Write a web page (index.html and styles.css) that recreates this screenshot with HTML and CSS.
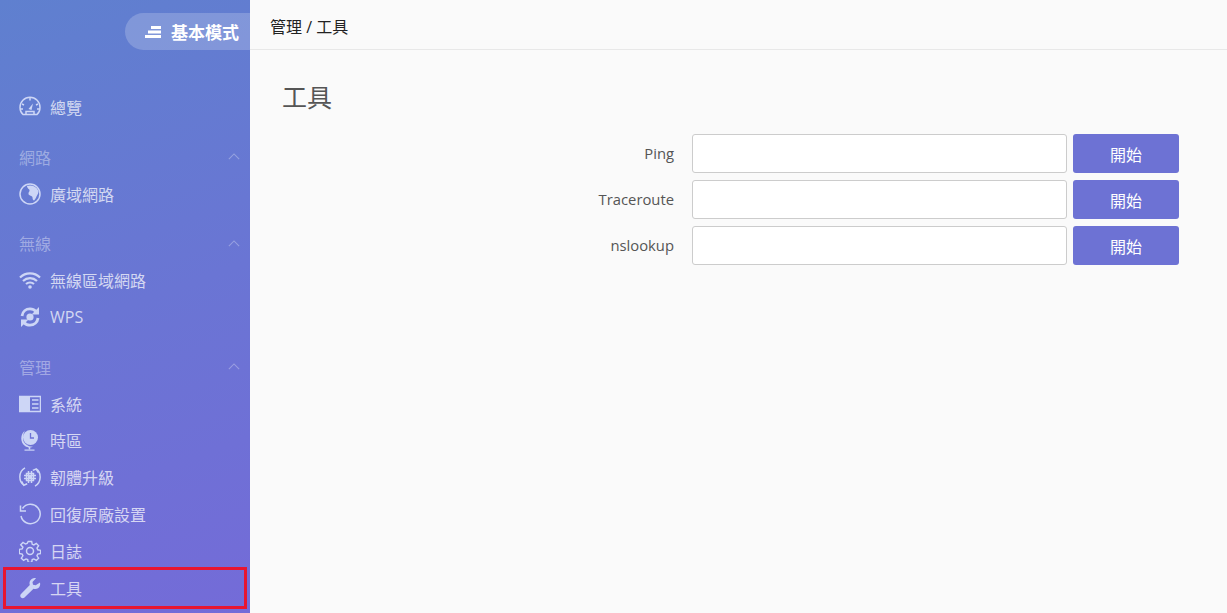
FILE: index.html
```html
<!DOCTYPE html>
<html lang="zh-Hant">
<head>
<meta charset="utf-8">
<title>工具</title>
<link rel="stylesheet" href="styles.css">
</head>
<body>
<div class="app">
  <aside class="sidebar">
    <div class="mode-row">
      <div class="mode-pill">
        <svg class="mode-icon" viewBox="0 0 16 12"><path d="M6 0h10v3H6zM3 4.500h13v3H3zM0 9h16v3H0z" fill="#fff"/></svg>
        <span>基本模式</span>
      </div>
    </div>
    <nav class="menu">
      <a class="item">
        <svg class="icon" viewBox="0 0 22 22"><path d="M4 18.500a10 10 0 1 1 14 0z" class="ln"/><path d="M11 2v2.500M3 8l2 1M19 8l-2 1M1.500 13H4M20.500 13H18" class="ln"/><path d="M9.500 13 14 7.500l-1.500 6.500z" class="fl"/><path d="M7 18v-2.500h8V18" class="ln"/></svg>
        <span>總覽</span>
      </a>
      <div class="group">
        <span>網路</span>
        <svg class="chev" viewBox="0 0 14 8"><path d="M1 7l6-6 6 6"/></svg>
      </div>
      <a class="item">
        <svg class="icon" viewBox="0 0 22 22"><circle cx="11" cy="11" r="10" class="ln"/><path d="M8 3c3-1.200 7.500-.5 10 2.500 1.800 2.200 1.700 4.500.3 6.500-1 1.500-1.500 4-3 5.200-1 .8-1.800-1.200-1.800-2.700 0-2-3.500-1.500-4-3.500-.5-1.800 1.500-2.500 1-4-.3-1-2-1.500-2.500-3.500z" class="fl"/></svg>
        <span>廣域網路</span>
      </a>
      <div class="group">
        <span>無線</span>
        <svg class="chev" viewBox="0 0 14 8"><path d="M1 7l6-6 6 6"/></svg>
      </div>
      <a class="item">
        <svg class="icon" viewBox="0 0 22 18"><path d="M1 6.500c5.500-5.500 14.500-5.500 20 0M4 10c4-3.800 10-3.800 14 0M7 13c2.300-2 5.700-2 8 0" class="wf"/><circle cx="11" cy="16" r="1.800" class="fl"/></svg>
        <span>無線區域網路</span>
      </a>
      <a class="item">
        <svg class="icon" viewBox="0 0 22 22"><circle cx="11" cy="11" r="3.600" class="fl"/><path d="M3 10C3.500 5.500 7 2.800 11 2.800c2.500 0 4.500 1 6 2.700" class="wb"/><path d="M19 12c-.5 4.500-4 7.200-8 7.200-2.500 0-4.500-1-6-2.700" class="wb"/><path d="M20 1v7.500h-7.500zM2 21v-7.500h7.500z" class="fl"/></svg>
        <span>WPS</span>
      </a>
      <div class="group">
        <span>管理</span>
        <svg class="chev" viewBox="0 0 14 8"><path d="M1 7l6-6 6 6"/></svg>
      </div>
      <a class="item">
        <svg class="icon" viewBox="0 0 22 16"><path d="M.5.500h10.500v15H.500z" class="fl"/><path d="M.5.500h21v15H.500z" class="ln"/><path d="M13 4h6.500M13 8h6.500M13 12h6.500" class="ln"/></svg>
        <span>系統</span>
      </a>
      <a class="item">
        <svg class="icon" viewBox="0 0 22 22"><path d="M6 1.500C1 5.500 1 13.500 6 17c2.500 1.700 5.500 1.900 8 .8-5.500 0-10-3.800-10-8.300 0-3 .8-6.500 2-8z" class="fl"/><circle cx="11.500" cy="8.500" r="7.500" class="fl"/><path d="M11.500 4v5h3.500" class="cut"/><path d="M10.500 18v2.500" class="ln"/><path d="M5.500 20.500h10v1.200h-10z" class="fl"/></svg>
        <span>時區</span>
      </a>
      <a class="item">
        <svg class="icon" viewBox="0 0 22 22"><path d="M6 1.800C-.8 5.500-.5 15.500 4.800 19M2.600 15.500l2.200 3.800 3.400-1.500M16 20.200c6.800-3.700 6.500-13.700 1.200-17.200M19.400 6.700 17.200 3l-3.400 1.400" class="ln"/><path d="M7.500 7.500h7v7h-7z" class="ln"/><path d="M9.500 5v12M12.500 5v12M5 9.500h12M5 12.500h12" class="ln"/><path d="M9.500 9.500h3v3h-3z" class="fl"/></svg>
        <span>韌體升級</span>
      </a>
      <a class="item">
        <svg class="icon" viewBox="0 0 22 22"><path d="M3.500 5.500A9.700 9.700 0 1 1 2 13" class="ln"/><path d="M1.500 2.500v5.500H7" class="ln"/></svg>
        <span>回復原廠設置</span>
      </a>
      <a class="item">
        <svg class="icon" viewBox="0 0 22 22"><path d="M9.200 1h3.600l.6 3 1.700.7 2.600-1.700 2.400 2.500-1.700 2.500.8 1.800 3 .5v3.400l-3 .6-.8 1.800 1.700 2.500-2.400 2.400-2.600-1.600-1.700.7-.6 3H9.200l-.6-3-1.700-.7-2.600 1.600-2.400-2.400 1.700-2.500-.8-1.800-3-.6V9.300l3-.5.8-1.800L1.300 4.500 3.700 2l2.600 1.700L8 3z" class="ln" transform="translate(.5 .5) scale(.95)"/><circle cx="11" cy="11" r="3.500" class="ln"/></svg>
        <span>日誌</span>
      </a>
      <a class="item">
        <svg class="icon" viewBox="0 0 22 22"><path d="M21 5.500c.6 2.500-.2 4.500-2 5.700-1.400.9-3 1-4.500.5L5.500 20.500c-1 1-2.500 1-3.500 0s-1-2.500 0-3.500l8.800-9c-.5-1.500-.4-3.100.5-4.500C12.500 1.700 14.500.7 17 1.200L13.500 5l.5 2.700 2.700.6z" class="fl"/></svg>
        <span>工具</span>
      </a>
      <div class="marker"></div>
    </nav>
  </aside>
  <main class="main">
    <header class="crumb">管理 / 工具</header>
    <section class="content">
      <h1 class="title">工具</h1>
      <form class="tools">
        <label class="tool-label">Ping</label>
        <input class="tool-input" type="text">
        <button class="tool-btn" type="button">開始</button>
        <label class="tool-label">Traceroute</label>
        <input class="tool-input" type="text">
        <button class="tool-btn" type="button">開始</button>
        <label class="tool-label">nslookup</label>
        <input class="tool-input" type="text">
        <button class="tool-btn" type="button">開始</button>
      </form>
    </section>
  </main>
</div>
</body>
</html>
```

FILE: styles.css
```css
* { box-sizing: border-box; }
html, body { margin: 0; height: 100%; }
body {
  overflow: hidden;
  font-family: "Open Sans", "Noto Sans CJK TC", sans-serif;
  font-size: 14px;
  background: #fafafa;
}
.app { display: flex; height: 613px; }
.sidebar {
  width: 250px;
  flex: none;
  background: linear-gradient(160deg, #5f80cf 0%, #6a75d4 50%, #746bd8 100%);
}
.mode-row { display: flex; justify-content: flex-end; padding-top: 13px; }
.mode-pill {
  width: 125px;
  height: 37px;
  display: flex;
  align-items: center;
  gap: 10px;
  padding-left: 20px;
  background: rgba(255,255,255,.2);
  border-radius: 18.500px 0 0 18.500px;
  color: #fff;
  font-size: 17px;
  font-weight: 700;
  white-space: nowrap;
}
.mode-icon { width: 16px; height: 12px; flex: none; }
.menu { position: relative; margin-top: 38.800px; }
.item, .group {
  height: 36.900px;
  display: flex;
  align-items: center;
  padding-left: 19px;
  font-size: 16px;
  white-space: nowrap;
}
.item { color: rgba(255,255,255,.72); }
.item span { margin-left: 9px; }
.group {
  margin-top: 12.700px;
  padding-right: 10px;
  justify-content: space-between;
  color: rgba(255,255,255,.38);
}
.icon { width: 22px; height: 22px; flex: none; }
.chev { width: 12px; height: 7px; }
.chev path { fill: none; stroke: rgba(255,255,255,.3); stroke-width: 1.300; }
.ln { fill: none; stroke: #cdd6f6; stroke-width: 1.500; }
.wf { fill: none; stroke: #cdd6f6; stroke-width: 2.200; }
.wb { fill: none; stroke: #cdd6f6; stroke-width: 2.800; }
.fl { fill: #cdd6f6; }
.cut { fill: none; stroke: #6d72d6; stroke-width: 1.300; }
.marker {
  position: absolute;
  left: 3px;
  right: 3px;
  bottom: -2.500px;
  height: 42px;
  border: 3px solid #e81530;
}
.main { flex: 1; min-width: 0; }
.crumb {
  height: 50px;
  display: flex;
  align-items: center;
  padding: 2px 20px 0;
  border-bottom: 1px solid #e8e8e8;
  color: #222;
  font-size: 16px;
}
.content { padding: 30px 48px 0 32px; }
.title {
  margin: 0;
  height: 54px;
  color: #555;
  font-size: 25px;
  font-weight: 400;
  line-height: 34px;
}
.tools {
  display: grid;
  grid-template-columns: 1fr 375px 106px;
  grid-auto-rows: 39px;
  column-gap: 6px;
  row-gap: 7px;
  align-items: stretch;
}
.tool-label {
  align-self: center;
  margin-right: 12px;
  padding-bottom: 2px;
  text-align: right;
  color: #555;
  font-size: 14.800px;
}
.tool-input {
  border: 1px solid #ccc;
  border-radius: 3px;
  background: #fff;
  padding: 0 10px;
}
.tool-btn {
  border: 0;
  border-radius: 3px;
  background: #6d72d4;
  color: #fff;
  font-family: inherit;
  font-size: 16px;
  padding: 0;
}
```
